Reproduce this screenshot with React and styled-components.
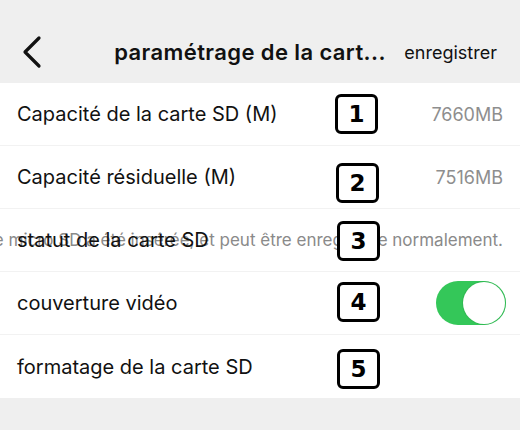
import React, { useState } from 'react'
import styled, { createGlobalStyle } from 'styled-components'

const GlobalStyle = createGlobalStyle`
    html, body {
        margin: 0;
        padding: 0;
        background: #efefef;
        font-family: Inter, "Liberation Sans", Arial, sans-serif;
    }
`

const Page = styled.div`
    width: 520px;
    height: 430px;
    background: #efefef;
    overflow: hidden;
`

const Header = styled.div`
    height: 83px;
    display: grid;
    grid-template-columns: 100px 1fr 120px;
    align-items: center;
    padding-top: 21px;
    box-sizing: border-box;
`

const BackButton = styled.div`
    padding-left: 20px;
    display: flex;
    align-items: center;
`

const Title = styled.div`
    font-size: 22px;
    font-weight: 600;
    letter-spacing: 0.4px;
    color: #111;
    white-space: nowrap;
    text-align: center;
`

const SaveButton = styled.div`
    font-size: 18px;
    color: #111;
    text-align: right;
    padding-right: 23px;
`

const List = styled.div`
    background: #fff;
`

const Row = styled.div`
    position: relative;
    height: 62px;
    display: flex;
    align-items: center;
    justify-content: space-between;
    padding: 0 17px;
    border-bottom: 1px solid #f2f2f2;
    overflow: hidden;
    &:last-child {
        border-bottom: none;
        height: 63px;
    }
`

const Label = styled.span`
    position: relative;
    z-index: 1;
    font-size: 20px;
    color: #111;
    white-space: nowrap;
`

const Value = styled.span`
    font-size: 18px;
    color: #8e8e8e;
    white-space: nowrap;
`

const StatusText = styled.span`
    position: absolute;
    right: 17px;
    font-size: 17px;
    color: #8a8a8a;
    white-space: nowrap;
`

const Badge = styled.div`
    position: absolute;
    left: ${p => p.left || 335}px;
    top: ${p => p.top || 11}px;
    z-index: 2;
    width: 37px;
    height: 34px;
    border: 3px solid #000;
    border-radius: 6px;
    background: #fff;
    display: flex;
    align-items: center;
    justify-content: center;
    font-family: "DejaVu Sans", sans-serif;
    font-weight: bold;
    font-size: 23px;
    color: #000;
`

const Switch = styled.div`
    width: 70px;
    height: 44px;
    margin-right: -3px;
    border-radius: 22px;
    background: ${p => (p.on ? '#34c759' : '#e5e5ea')};
    display: flex;
    align-items: center;
    justify-content: ${p => (p.on ? 'flex-end' : 'flex-start')};
    padding: 1px;
    box-sizing: border-box;
    cursor: pointer;
`

const Knob = styled.div`
    width: 42px;
    height: 42px;
    border-radius: 50%;
    background: #fff;
    box-shadow: 0 0 0 1px rgba(40, 160, 70, 0.35);
`

function App() {
    const [cover, setCover] = useState(true)

    return (
        <Page>
            <GlobalStyle />
            <Header>
                <BackButton>
                    <svg width="24" height="34" viewBox="0 0 24 34" fill="none">
                        <polyline points="19,3 5,17 19,31" stroke="#111" strokeWidth="3.2" strokeLinecap="round" strokeLinejoin="round" />
                    </svg>
                </BackButton>
                <Title>paramétrage de la cart...</Title>
                <SaveButton>enregistrer</SaveButton>
            </Header>
            <List>
                <Row>
                    <Label>Capacité de la carte SD (M)</Label>
                    <Badge>1</Badge>
                    <Value>7660MB</Value>
                </Row>
                <Row>
                    <Label>Capacité résiduelle (M)</Label>
                    <Badge top={17} left={336}>2</Badge>
                    <Value>7516MB</Value>
                </Row>
                <Row>
                    <Label>statut de la carte SD</Label>
                    <StatusText>La carte micro SD a été insérée, et peut être enregistrée normalement.</StatusText>
                    <Badge top={12} left={337}>3</Badge>
                </Row>
                <Row>
                    <Label>couverture vidéo</Label>
                    <Badge top={10} left={337}>4</Badge>
                    <Switch on={cover} onClick={() => setCover(!cover)}>
                        <Knob />
                    </Switch>
                </Row>
                <Row>
                    <Label>formatage de la carte SD</Label>
                    <Badge top={14} left={337}>5</Badge>
                </Row>
            </List>
        </Page>
    )
}

export default App
